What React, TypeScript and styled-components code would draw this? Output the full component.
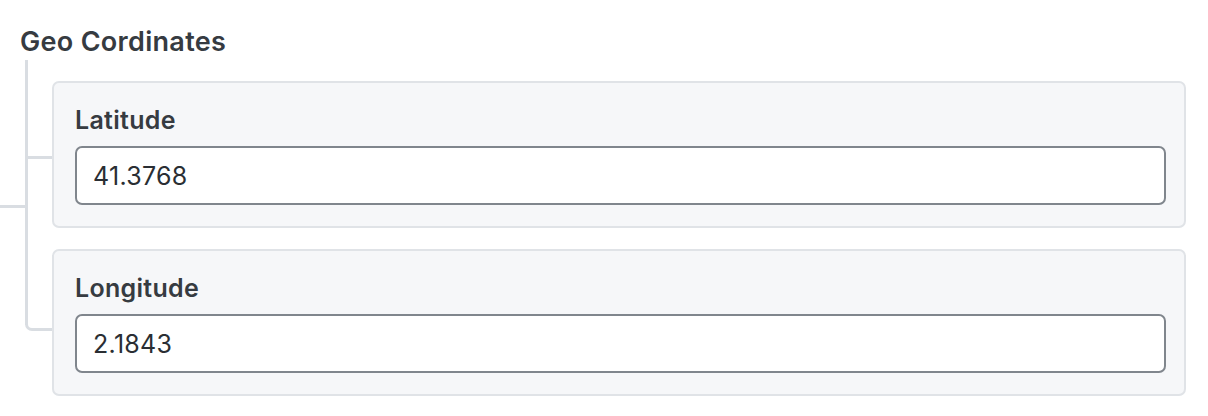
import React from 'react';
import styled, { createGlobalStyle } from 'styled-components';

const GlobalStyle = createGlobalStyle`
    html, body {
        margin: 0;
        padding: 0;
        background: #ffffff;
    }
    body {
        font-family: Inter, "Noto Sans", "Liberation Sans", sans-serif;
        color: #353a40;
    }
`;

type Coord = { label: string; value: string };

const coords: Coord[] = [
    { label: 'Latitude', value: '41.3768' },
    { label: 'Longitude', value: '2.1843' },
];

export default function App() {
    return (
        <>
            <GlobalStyle />
            <StyledGroup>
                <GroupTitle>Geo Cordinates</GroupTitle>
                <Branches>
                    {coords.map((c) => (
                        <Branch key={c.label}>
                            <Card>
                                <FieldLabel>{c.label}</FieldLabel>
                                <FieldInput defaultValue={c.value} />
                            </Card>
                        </Branch>
                    ))}
                </Branches>
            </StyledGroup>
        </>
    );
}

const LINE = '#d9dde2';

const StyledGroup = styled.section`
    position: relative;
    padding: 24px 22px 21px 0;

    /* connector coming from the parent level */
    &::before {
        content: '';
        position: absolute;
        left: 0;
        top: calc(50% - 4px);
        width: 26px;
        height: 3px;
        background: ${LINE};
    }
`;

const GroupTitle = styled.h2`
    margin: 0 0 0 20px;
    font-size: 27px;
    line-height: 36px;
    font-weight: 600;
    color: #363b41;
    letter-spacing: 0.3px;
`;

const Branches = styled.div`
    display: flex;
    flex-direction: column;
    gap: 21px;
    padding: 21px 0 0 52px;
`;

const Branch = styled.div`
    position: relative;

    /* vertical trunk + horizontal tick */
    &::before {
        content: '';
        position: absolute;
        left: -27px;
        top: -21px;
        width: 3px;
        background: ${LINE};
    }
    &::after {
        content: '';
        position: absolute;
        left: -27px;
        width: 27px;
        top: calc(50% + 1px);
        height: 3px;
        background: ${LINE};
    }

    &:not(:last-child)::before {
        bottom: -21px;
    }

    &:last-child::before {
        bottom: calc(50% - 2px);
    }
    &:last-child::after {
        top: auto;
        bottom: calc(50% - 8px);
        height: 10px;
        background: transparent;
        border-left: 3px solid ${LINE};
        border-bottom: 3px solid ${LINE};
        border-bottom-left-radius: 7px;
        box-sizing: border-box;
    }
`;

const Card = styled.div`
    display: flex;
    flex-direction: column;
    gap: 10px;
    box-sizing: border-box;
    height: 147px;
    padding: 21px 18px 21px 21px;
    background: #f6f7f9;
    border: 2px solid #e0e3e7;
    border-radius: 7px;
`;

const FieldLabel = styled.label`
    font-size: 25px;
    line-height: 32px;
    font-weight: 600;
    color: #363b41;
    letter-spacing: 0.3px;
`;

const FieldInput = styled.input`
    box-sizing: border-box;
    width: 100%;
    height: 60px;
    padding: 0 16px;
    border: 2px solid #80868d;
    border-radius: 7px;
    background: #ffffff;
    font-family: Inter, "Noto Sans", "Liberation Sans", sans-serif;
    font-size: 25px;
    letter-spacing: 0.3px;
    color: #2a2e33;
    outline: none;
`;
